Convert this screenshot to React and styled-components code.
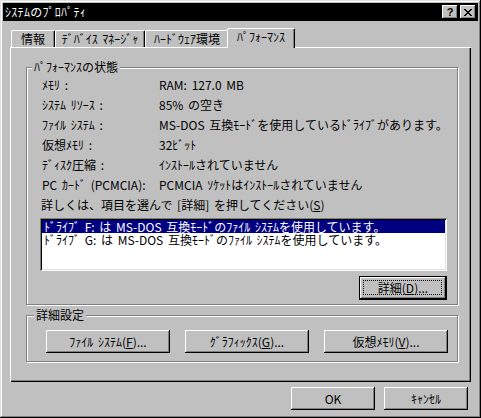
import React from 'react';
import styled, {createGlobalStyle} from 'styled-components';

const GlobalStyle = createGlobalStyle`
    html, body {
        margin: 0;
        padding: 0;
        background: #c0c0c0;
    }
`

const raised = `
    box-shadow: inset -1px -1px #000, inset 1px 1px #fff, inset -2px -2px #808080;
`

const Window = styled.div`
    width: 481px;
    height: 418px;
    box-sizing: border-box;
    padding: 3px;
    background: #c0c0c0;
    box-shadow: inset -1px -1px #000, inset 1px 1px #dfdfdf, inset -2px -2px #808080, inset 2px 2px #fff;
    display: flex;
    flex-direction: column;
    font-family: "Noto Sans CJK JP", sans-serif;
    font-size: 12px;
    word-spacing: 2px;
    color: #000;
`

const TitleBar = styled.div`
    height: 18px;
    background: #000;
    color: #fff;
    display: flex;
    align-items: center;
    padding: 0 2px;
    line-height: 18px;
`

const TitleText = styled.span`
    flex: 1;
    white-space: nowrap;
    letter-spacing: 0.3px;
`

const TitleButton = styled.div`
    width: 16px;
    height: 14px;
    box-sizing: border-box;
    background: #c0c0c0;
    color: #000;
    ${raised}
    display: flex;
    align-items: center;
    justify-content: center;
    margin-left: ${props => props.$gap || 0}px;
    font-family: "Liberation Sans", sans-serif;
    font-weight: bold;
    font-size: 11px;
    line-height: 1;
`

const Body = styled.div`
    display: flex;
    flex-direction: column;
    padding: 7px 7px 0 7px;
`

const TabStrip = styled.div`
    display: flex;
    align-items: flex-end;
    height: 20px;
    padding-left: 1px;
    margin-bottom: -1px;
`

const Tab = styled.div`
    position: relative;
    box-sizing: border-box;
    width: ${props => props.$w}px;
    height: ${props => props.$active ? 20 : 17}px;
    margin: ${props => props.$active ? '0 -2px 0 -2px' : '0 0 1px 0'};
    padding-bottom: ${props => props.$active ? 3 : 0}px;
    background: #c0c0c0;
    border-top: 1px solid #fff;
    border-left: 1px solid #fff;
    border-right: 1px solid #000;
    border-radius: 2px 2px 0 0;
    box-shadow: inset -1px 0 #808080;
    z-index: ${props => props.$active ? 2 : 0};
    display: flex;
    align-items: center;
    justify-content: center;
    white-space: nowrap;
    line-height: 14px;
`

const Panel = styled.div`
    box-sizing: border-box;
    height: 335px;
    padding: 20px 13px 0 16px;
    box-shadow: inset 1px 1px #fff, inset -1px -1px #000, inset -2px -2px #808080;
    display: flex;
    flex-direction: column;
`

const Group = styled.div`
    position: relative;
    box-sizing: border-box;
    height: ${props => props.$h}px;
    margin-top: ${props => props.$mt || 0}px;
    border: 1px solid #808080;
    box-shadow: inset 1px 1px #fff, 1px 1px #fff;
    padding: ${props => props.$pad};
    display: flex;
    flex-direction: column;
`

const Legend = styled.span`
    position: absolute;
    top: -8px;
    left: ${props => props.$left}px;
    padding: 0 2px;
    background: #c0c0c0;
    line-height: 14px;
    white-space: nowrap;
`

const InfoRow = styled.div`
    display: flex;
    height: 20px;
    line-height: 20px;
    padding-left: 2px;
    white-space: nowrap;
`

const InfoLabel = styled.span`
    width: 117px;
    flex: none;
`

const Prompt = styled.div`
    height: 20px;
    line-height: 20px;
    padding-left: 1px;
    white-space: nowrap;
`

const ListBox = styled.div`
    margin-top: 3px;
    height: 53px;
    box-sizing: border-box;
    padding: 2px;
    background: #fff;
    box-shadow: inset 1px 1px #808080, inset -1px -1px #fff, inset 2px 2px #000, inset -2px -2px #dfdfdf;
`

const ListItem = styled.div`
    height: 13px;
    line-height: 13px;
    padding-left: 2px;
    white-space: nowrap;
    background: ${props => props.$selected ? '#000080' : 'transparent'};
    color: ${props => props.$selected ? '#fff' : '#000'};
`

const ButtonRow = styled.div`
    display: flex;
    justify-content: ${props => props.$justify || 'flex-start'};
    gap: ${props => props.$gap || 0}px;
    margin-top: ${props => props.$mt || 0}px;
    padding-right: ${props => props.$pr || 0}px;
`

const Button = styled.div`
    position: relative;
    box-sizing: border-box;
    width: ${props => props.$w}px;
    height: ${props => props.$h || 23}px;
    background: #c0c0c0;
    display: flex;
    align-items: center;
    justify-content: center;
    white-space: nowrap;
    line-height: 14px;
    ${props => props.$default
        ? 'box-shadow: inset 0 0 0 1px #000, inset -2px -2px #000, inset 2px 2px #fff, inset -3px -3px #808080;'
        : raised}

    ${props => props.$default && `
        &::after {
            content: '';
            position: absolute;
            inset: 4px 5px 5px 4px;
            border: 1px dotted #000;
        }
    `}
`

const U = styled.u`
    text-decoration-skip-ink: none;
    text-underline-offset: 1px;
`

const CloseIcon = () => (
    <svg width="8" height="7" viewBox="0 0 8 7" shapeRendering="crispEdges">
        <path d="M0 0h2v1h-2zM6 0h2v1h-2zM1 1h2v1h-2zM5 1h2v1h-2zM2 2h4v1h-4zM3 3h2v1h-2zM2 4h4v1h-4zM1 5h2v1h-2zM5 5h2v1h-2zM0 6h2v1h-2zM6 6h2v1h-2z" fill="#000"/>
    </svg>
)

const tabs = [
    {label: '情報', w: 44},
    {label: 'ﾃﾞﾊﾞｲｽ ﾏﾈｰｼﾞｬ', w: 90},
    {label: 'ﾊｰﾄﾞｳｪｱ環境', w: 84},
    {label: 'ﾊﾟﾌｫｰﾏﾝｽ', w: 68, active: true},
]

const info = [
    ['ﾒﾓﾘ :', 'RAM: 127.0 MB'],
    ['ｼｽﾃﾑ ﾘｿｰｽ :', '85% の空き'],
    ['ﾌｧｲﾙ ｼｽﾃﾑ :', 'MS-DOS 互換ﾓｰﾄﾞを使用しているﾄﾞﾗｲﾌﾞがあります。'],
    ['仮想ﾒﾓﾘ :', '32ﾋﾞｯﾄ'],
    ['ﾃﾞｨｽｸ圧縮 :', 'ｲﾝｽﾄｰﾙされていません'],
    ['PC ｶｰﾄﾞ (PCMCIA):', 'PCMCIA ｿｹｯﾄはｲﾝｽﾄｰﾙされていません'],
]

const drives = [
    'ﾄﾞﾗｲﾌﾞ F: は MS-DOS 互換ﾓｰﾄﾞのﾌｧｲﾙ ｼｽﾃﾑを使用しています。',
    'ﾄﾞﾗｲﾌﾞ G: は MS-DOS 互換ﾓｰﾄﾞのﾌｧｲﾙ ｼｽﾃﾑを使用しています。',
]

export default function App() {
    return (<>
        <GlobalStyle/>
        <Window>
            <TitleBar>
                <TitleText>ｼｽﾃﾑのﾌﾟﾛﾊﾟﾃｨ</TitleText>
                <TitleButton>?</TitleButton>
                <TitleButton $gap={2}><CloseIcon/></TitleButton>
            </TitleBar>

            <Body>
                <TabStrip>
                    {tabs.map(t => <Tab key={t.label} $w={t.w} $active={t.active}>{t.label}</Tab>)}
                </TabStrip>

                <Panel>
                    <Group $h={238} $pad={'7px 10px 0 13px'}>
                        <Legend $left={5}>ﾊﾟﾌｫｰﾏﾝｽの状態</Legend>
                        {info.map(([label, value]) => (
                            <InfoRow key={label}>
                                <InfoLabel>{label}</InfoLabel>
                                <span>{value}</span>
                            </InfoRow>
                        ))}
                        <Prompt>詳しくは、項目を選んで [詳細] を押してください(<U>S</U>)</Prompt>
                        <ListBox>
                            {drives.map((d, i) => <ListItem key={d} $selected={i === 0}>{d}</ListItem>)}
                        </ListBox>
                        <ButtonRow $justify={'flex-end'} $mt={5}>
                            <Button $w={88} $h={24} $default>詳細(<U>D</U>)...</Button>
                        </ButtonRow>
                    </Group>

                    <Group $h={47} $mt={10} $pad={'14px 0 0 19px'}>
                        <Legend $left={7}>詳細設定</Legend>
                        <ButtonRow $gap={15}>
                            <Button $w={124}>ﾌｧｲﾙ ｼｽﾃﾑ(<U>F</U>)...</Button>
                            <Button $w={124}>ｸﾞﾗﾌｨｯｸｽ(<U>G</U>)...</Button>
                            <Button $w={124}>仮想ﾒﾓﾘ(<U>V</U>)...</Button>
                        </ButtonRow>
                    </Group>
                </Panel>

                <ButtonRow $justify={'flex-end'} $gap={9} $mt={5} $pr={3}>
                    <Button $w={84}>OK</Button>
                    <Button $w={84}>ｷｬﾝｾﾙ</Button>
                </ButtonRow>
            </Body>
        </Window>
    </>);
}
